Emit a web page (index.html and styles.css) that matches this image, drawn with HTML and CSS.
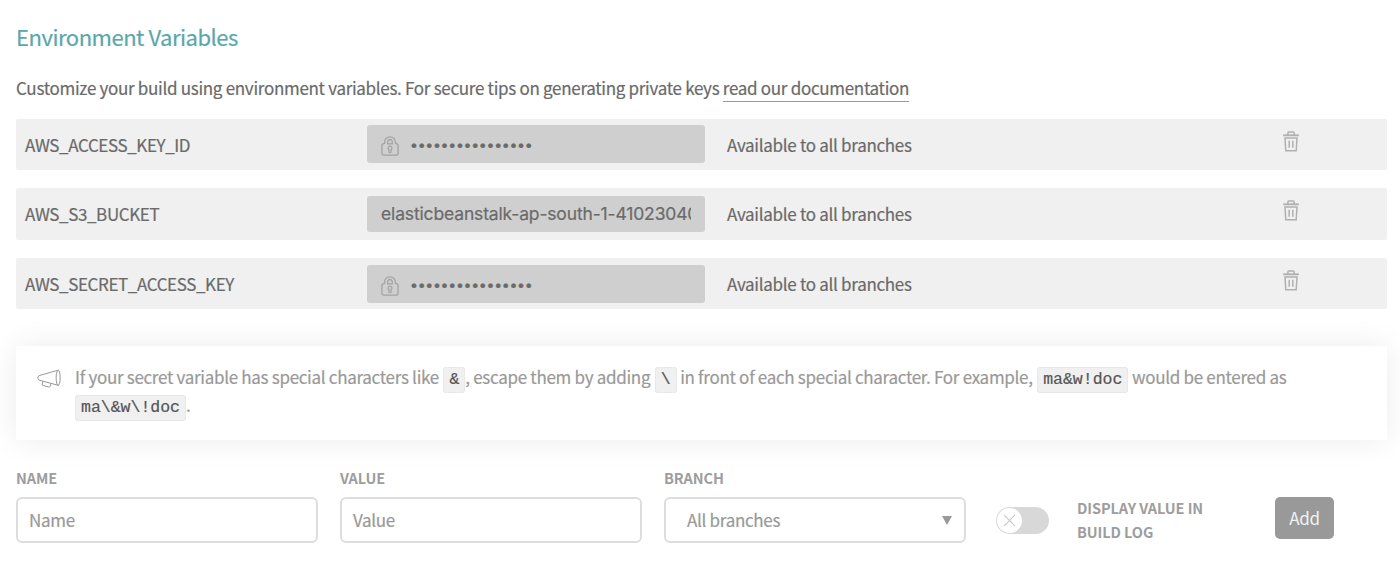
FILE: index.html
```html
<!DOCTYPE html>
<html lang="en">
<head>
<meta charset="utf-8">
<title>Environment Variables</title>
<link rel="stylesheet" href="styles.css">
</head>
<body>
<svg class="sprite" width="0" height="0" aria-hidden="true">
  <symbol id="lock" viewBox="0 0 18 20">
    <g fill="none" stroke="#a4a4a4" stroke-width="1.3">
      <path d="M3.600 7.400V6a5.400 5.200 0 0 1 10.800 0v1.400q2.700 0 2.700 2.400v7.200q0 2.200-2.200 2.200H3.100Q.9 19.200.9 17V9.800Q.9 7.400 3.600 7.400z"/>
      <path d="M6.700 7.800V5.900a2.300 2.400 0 0 1 4.600 0v1.900z"/>
      <path d="M9 10.200a2 2 0 0 0-1 3.700v1.800a1 1 0 0 0 2 0v-1.800a2 2 0 0 0-1-3.700z"/>
    </g>
  </symbol>
  <symbol id="trash" viewBox="0 0 16 21">
    <g fill="none" stroke="#b0b0b0" stroke-width="1.500">
      <path d="M.2 4.300h15.600" stroke-width="1.900"/>
      <path d="M4.900 4V1.700q0-.8.8-.8h4.600q.8 0 .8.800V4"/>
      <path d="M2 7h12l-.8 12.800H2.800z"/>
      <path d="M6.200 9.800v7M9.800 9.800v7"/>
    </g>
  </symbol>
</svg>
<main class="page">
  <h1 class="title">Environment Variables</h1>
  <p class="intro">Customize your build using environment variables. For secure tips on generating private keys <a class="link">read our documentation</a></p>
  <section class="vars">
    <div class="row">
      <span class="key">AWS_ACCESS_KEY_ID</span>
      <div class="val"><svg class="lock"><use href="#lock"/></svg><span class="dots">••••••••••••••••</span></div>
      <span class="scope">Available to all branches</span>
      <svg class="trash"><use href="#trash"/></svg>
    </div>
    <div class="row row-plain">
      <span class="key">AWS_S3_BUCKET</span>
      <div class="val"><span class="plain">elasticbeanstalk-ap-south-1-41023040</span></div>
      <span class="scope">Available to all branches</span>
      <svg class="trash"><use href="#trash"/></svg>
    </div>
    <div class="row row-last">
      <span class="key">AWS_SECRET_ACCESS_KEY</span>
      <div class="val"><svg class="lock"><use href="#lock"/></svg><span class="dots">••••••••••••••••</span></div>
      <span class="scope">Available to all branches</span>
      <svg class="trash"><use href="#trash"/></svg>
    </div>
  </section>
  <aside class="notice">
    <svg class="horn" viewBox="0 0 26 20">
      <g fill="none" stroke="#939393" stroke-width="1" stroke-linejoin="round">
        <path d="M22.200.8 3 6.200Q1 6.800 1 8v1.600q0 1.400 2 1.800l19.200 5.200"/>
        <ellipse cx="22" cy="8.700" rx="2.100" ry="8"/>
        <path d="M6.200 12.500 5.400 15.400q-.2 1 .8 1.300l6 1.700q1 .3 1.400-.7l.9-2.900"/>
      </g>
    </svg>
    <p class="note">If your secret variable has special characters like <code class="code">&amp;</code>, escape them by adding <code class="code">\</code> in front of each special character. For example, <code class="code">ma&amp;w!doc</code> would be entered as<br><code class="code">ma\&amp;w\!doc</code>.</p>
  </aside>
  <form class="form">
    <div class="field"><label class="label">NAME</label><div class="box">Name</div></div>
    <div class="field"><label class="label">VALUE</label><div class="box">Value</div></div>
    <div class="field"><label class="label">BRANCH</label><div class="box select">All branches<svg class="caret" viewBox="0 0 10 9"><path d="M0 0h10L5 9z" fill="#999"/></svg></div></div>
    <div class="toggle"><div class="knob"><svg class="cross" viewBox="0 0 14 14"><path d="M1 1l12 12M13 1 1 13" stroke="#c9c9c9" stroke-width="1.200"/></svg></div></div>
    <span class="label log">DISPLAY VALUE IN<br>BUILD LOG</span>
    <div class="add">Add</div>
  </form>
</main>
</body>
</html>
```
FILE: styles.css
```css
* { box-sizing: border-box; }
body {
  margin: 0;
  background: #fff;
  color: #6a6a6a;
  font: 17px/26px "Noto Sans CJK SC", "Noto Sans", sans-serif;
  letter-spacing: -.3px;
  -webkit-text-stroke: .2px;
  overflow: hidden;
}
.sprite { display: block; }
.page { height: 561px; padding: 20px 13px 0 16px; white-space: nowrap; overflow: hidden; }
.title { margin: 0; font-size: 22px; line-height: 32px; font-weight: 400; color: #5aa7ac; letter-spacing: -.48px; }
.intro { margin: 23px 0 0; height: 44px; }
.link { border-bottom: 1px solid #999; display: inline-block; line-height: 26px; }
.vars { display: grid; grid-template-rows: 51px 52px 51px; row-gap: 18px; }
.row {
  display: grid;
  grid-template-columns: 342px 338px 578px 18px;
  align-items: center;
  background: #f0f0f0;
  border-radius: 2px;
  padding-left: 9px;
}
.key { letter-spacing: -.39px; }
.val {
  display: flex;
  align-items: center;
  height: 38px;
  margin-bottom: 1px;
  padding: 0 14px;
  background: #cfcfcf;
  border-radius: 3px;
}
.row-plain .val { height: 36px; margin-bottom: 0; }
.row-last .val { margin-bottom: -1px; }
.lock { width: 18px; height: 20px; margin-top: 4px; }
.dots { margin: 4px 0 0 12px; font: 17px/38px "Liberation Sans", sans-serif; letter-spacing: 1.7px; }
.plain { overflow: hidden; font: 17.5px/26px Inter, sans-serif; letter-spacing: -.15px; }
.scope { padding-left: 22px; }
.trash { width: 16px; height: 21px; margin-top: -7px; }
.notice {
  display: flex;
  margin-top: 37px;
  height: 94px;
  padding: 18px 0 0 21px;
  background: #fff;
  box-shadow: 0 0 30px rgba(0, 0, 0, .08);
  color: #999;
}
.horn { width: 25px; height: 20px; margin: 5px 13px 0 0; }
.note { margin: -1px 0 0; line-height: 28px; }
.code {
  margin-left: 1px;
  padding: 2px 5px 3px;
  border: 1px solid #e8e8e8;
  border-radius: 3px;
  background: #f0f0f0;
  color: #555;
  font: 16.500px/16px "Liberation Mono", monospace;
  letter-spacing: 0;
}
.code:last-child { margin-left: 0; }
.form { display: flex; margin-top: 26px; }
.label { display: block; font-size: 14.5px; line-height: 24px; font-weight: 700; color: #9d9d9d; letter-spacing: -.08px; -webkit-text-stroke: 0; }
.field { width: 302px; margin-right: 22px; }
.box {
  display: flex;
  align-items: center;
  height: 46px;
  margin-top: 7px;
  padding: 0 12px 0 11px;
  border: 2px solid #ddd;
  border-radius: 6px;
  color: #999;
}
.select { justify-content: space-between; padding-left: 21px; }
.caret { width: 10px; height: 9px; }
.toggle { width: 53px; height: 27px; margin: 41px 28px 0 8px; border-radius: 14px; background: #d8d8d8; padding: 1px; }
.knob { width: 25px; height: 25px; border-radius: 50%; background: #fff; display: flex; align-items: center; justify-content: center; }
.cross { width: 13px; height: 13px; }
.log { width: 198px; margin-top: 30px; }
.add {
  width: 59px;
  height: 42px;
  margin-top: 31px;
  border-radius: 5px;
  background: #999;
  color: #f2f2f2;
  line-height: 42px;
  text-align: center;
  -webkit-text-stroke: 0;
}
```
